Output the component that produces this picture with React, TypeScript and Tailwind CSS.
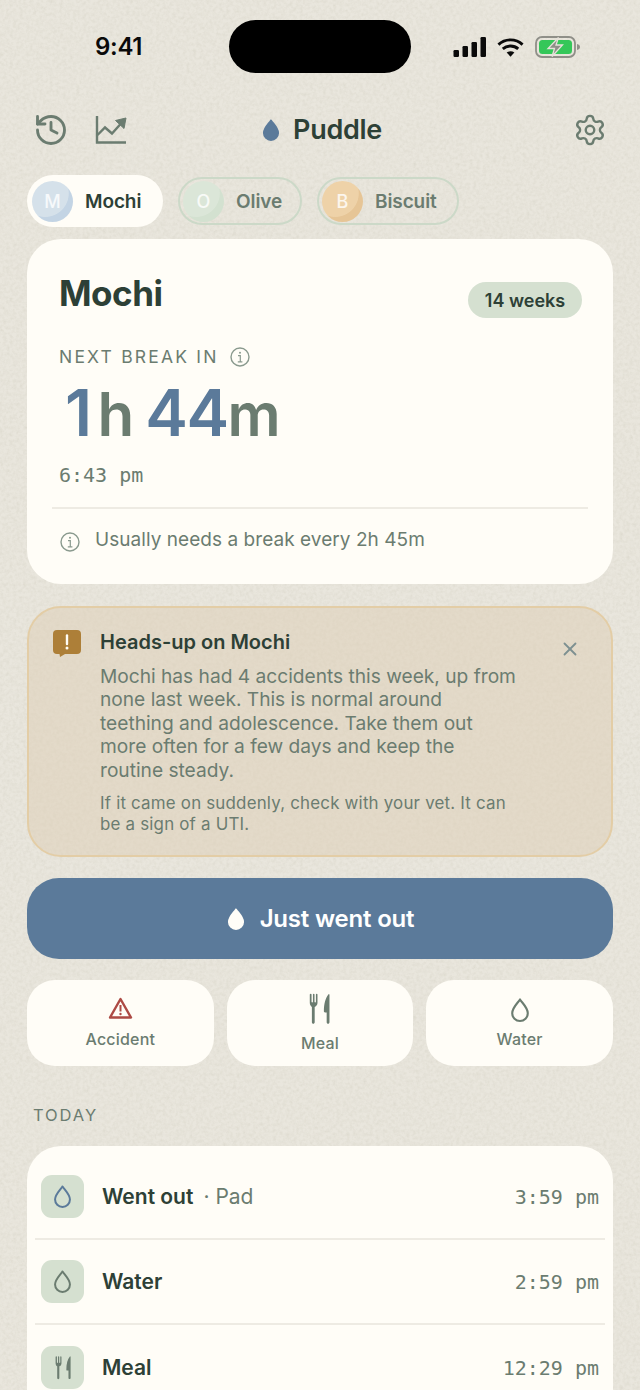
import React from 'react';
import { History, Settings, X } from 'lucide-react';

const Drop = ({ className, fill = 'none', stroke = 'currentColor', strokeWidth = 2.300 }: { className?: string; fill?: string; stroke?: string; strokeWidth?: number }) => (
  <svg viewBox="0 0 24 28" className={className} fill={fill} stroke={stroke} strokeWidth={strokeWidth}>
    <path d="M12 2.500C9.500 6.500 3.500 11.500 3.500 17.500a8.500 8.500 0 0 0 17 0C20.500 11.500 14.500 6.500 12 2.500Z" strokeLinejoin="round" />
  </svg>
);

const ForkKnife = ({ className }: { className?: string }) => (
  <svg viewBox="0 0 24 36" className={className} fill="currentColor">
    <path d="M2 1.200c.5 0 .9.4.9.9v8.200c0 .5.4.9.8.9s.8-.4.8-.9V2.100c0-.5.4-.9.9-.9s.9.4.9.9v8.200c0 .5.4.9.8.9s.8-.4.8-.9V2.100c0-.5.4-.9.9-.9s.9.4.9.9v9.400c0 2.400-1.200 4-3.200 4.700v17.600c0 1-.7 1.700-1.600 1.700s-1.600-.7-1.600-1.700V16.200C2.100 15.500.9 13.900.9 11.500V2.100c0-.5.5-.9 1.100-.9Z" />
    <path d="M22.600 1.300c.4 0 .8.4.8.9v31.500c0 1-.7 1.700-1.600 1.700s-1.600-.7-1.600-1.700V22.500h-1.900c-.8 0-1.300-.5-1.300-1.300 0-8.600 1.800-15.500 5.600-19.900Z" />
  </svg>
);

const Info = ({ className }: { className?: string }) => (
  <svg viewBox="0 0 20 20" className={className} fill="none" stroke="currentColor">
    <circle cx="10" cy="10" r="9" strokeWidth="1.400" />
    <circle cx="10" cy="5.800" r="1" fill="currentColor" stroke="none" />
    <path d="M8 8.700h2.300v6M7.800 14.800h4.600" strokeWidth="1.200" />
  </svg>
);

const TrendChart = ({ className }: { className?: string }) => (
  <svg viewBox="0 0 32 30" className={className} fill="none" stroke="currentColor" strokeWidth="2.400">
    <path d="M2 1v26.500h29" />
    <path d="M2.500 20l7.500-7.500 7 6 9-10" />
    <path d="M20.500 5.500L31 3l-2 10.500Z" fill="currentColor" strokeWidth="1" strokeLinejoin="round" />
  </svg>
);

const Warning = ({ className }: { className?: string }) => (
  <svg viewBox="0 0 24 22" className={className} fill="none" stroke="currentColor">
    <path d="M12 2L22.500 20.500H1.500Z" strokeWidth="2.400" strokeLinejoin="round" />
    <path d="M12 8v6.500" strokeWidth="2" />
    <circle cx="12" cy="17" r="1.200" fill="currentColor" stroke="none" />
  </svg>
);

const Bubble = ({ className }: { className?: string }) => (
  <svg viewBox="0 0 28 27" className={className}>
    <path d="M4 0h20a4 4 0 0 1 4 4v16a4 4 0 0 1-4 4H12l-5 3-.5-3H4a4 4 0 0 1-4-4V4a4 4 0 0 1 4-4Z" fill="#ad7f38" />
    <path d="M14 5.500v8.500" stroke="#fffdf7" strokeWidth="2.400" strokeLinecap="round" />
    <circle cx="14" cy="18" r="1.500" fill="#fffdf7" />
  </svg>
);

const StatusIcons = () => (
  <div className="flex items-center gap-[11px]">
    <svg viewBox="0 0 32 20" className="w-[33px] h-[20px]" fill="#0a0a0a">
      <rect x="0" y="13" width="5.500" height="7" rx="1.200" />
      <rect x="9" y="9" width="5.500" height="11" rx="1.200" />
      <rect x="18" y="5" width="5.500" height="15" rx="1.200" />
      <rect x="27" y="0" width="5.500" height="20" rx="1.200" />
    </svg>
    <svg viewBox="0 0 28 20" className="w-[27px] h-[20px]" fill="none" stroke="#0a0a0a" strokeWidth="3">
      <path d="M1.500 7.500c7-6.500 18-6.500 25 0" />
      <path d="M6 12c4.500-4 11.500-4 16 0" />
      <path d="M14 20l-4-4.200c2.300-1.800 5.700-1.800 8 0Z" fill="#0a0a0a" stroke="none" />
    </svg>
    <svg viewBox="0 0 46 22" className="w-[46px] h-[22px]">
      <rect x="1" y="1" width="39" height="20" rx="6" fill="none" stroke="#8f8f88" strokeWidth="1.800" />
      <rect x="4" y="4" width="33" height="14" rx="3.500" fill="#35c759" />
      <path d="M42 8v6c1.800-.4 3-1.500 3-3s-1.200-2.600-3-3Z" fill="#8f8f88" />
      <path d="M23.500 1.500L13 12.500h6.500l-2.500 8 10.500-11.500H21Z" fill="#8f8f88" stroke="#e6e2da" strokeWidth="1.300" />
    </svg>
  </div>
);

const pets = [
  { name: 'Mochi', letter: 'M', active: true, avatar: 'bg-[radial-gradient(circle_at_32%_30%,#d5e1ea_58%,#c3d4e4_60%)]', width: 'w-[136px]' },
  { name: 'Olive', letter: 'O', active: false, avatar: 'bg-[radial-gradient(circle_at_32%_30%,#dbe6d8_58%,#d3e1d0_60%)]', width: 'w-[124px]' },
  { name: 'Biscuit', letter: 'B', active: false, avatar: 'bg-[radial-gradient(circle_at_32%_30%,#eed2a8_58%,#e6c596_60%)]', width: 'w-[142px]' },
];

const logs = [
  { title: 'Went out', note: 'Pad', time: '3:59 pm', icon: <Drop className="w-[21px] h-[25px] text-[#5b7a9a]" /> },
  { title: 'Water', note: '', time: '2:59 pm', icon: <Drop className="w-[21px] h-[25px] text-[#6b7c70]" /> },
  { title: 'Meal', note: '', time: '12:29 pm', icon: <ForkKnife className="w-[16px] h-[25px] text-[#6b7c70]" /> },
];

export default function App() {
  return (
    <div className="relative w-[640px] h-[1390px] overflow-hidden bg-[#e9e6dd] font-['Inter',sans-serif] text-[#2d4036]">
      {/* paper texture */}
      <svg className="absolute inset-0 w-full h-full" aria-hidden="true">
        <filter id="paper">
          <feTurbulence type="fractalNoise" baseFrequency="0.3" numOctaves="3" seed="4" />
          <feColorMatrix values="0 0 0 0 0.48  0 0 0 0 0.46  0 0 0 0 0.36  0.5 0.5 0 0 -0.4" />
        </filter>
        <rect width="100%" height="100%" filter="url(#paper)" opacity="0.5" />
      </svg>

      <div className="relative flex flex-col">
        {/* status bar */}
        <div className="flex items-start h-[73px] pt-[20px]">
          <div className="w-[229px] pl-[95px] pt-[11px] text-[24px] leading-[32px] font-semibold text-[#0a0a0a] tracking-[-0.3px]">9:41</div>
          <div className="w-[182px] h-[53px] rounded-full bg-black" />
          <div className="pl-[42px] pt-[16px]"><StatusIcons /></div>
        </div>

        {/* header */}
        <div className="flex items-center justify-between h-[40px] mt-[37px] pl-[33px] pr-[33px]">
          <div className="flex items-center gap-[26px] w-[200px] text-[#6b7c70]">
            <History className="w-[36px] h-[36px]" strokeWidth={1.900} />
            <TrendChart className="w-[32px] h-[30px]" />
          </div>
          <div className="flex items-center gap-[12px] text-[27px] font-semibold tracking-[-0.3px] ml-[3px]">
            <Drop className="w-[20px] h-[24px]" fill="#5b7a9a" stroke="#5b7a9a" />
            Puddle
          </div>
          <div className="w-[200px] flex justify-end text-[#6b7c70]">
            <Settings className="w-[34px] h-[34px]" strokeWidth={1.700} />
          </div>
        </div>

        {/* pet pills */}
        <div className="flex items-center gap-[15px] mt-[25px] ml-[27px] h-[52px]">
          {pets.map((pet) => (
            <div
              key={pet.name}
              className={pet.active
                ? `flex items-center h-[52px] pl-[5px] rounded-full bg-[#fffdf7] ${pet.width}`
                : `flex items-center h-[48px] pl-[3px] rounded-full border-2 border-[#ccd9c8] ${pet.width}`}
            >
              <div className={`w-[41px] h-[41px] rounded-full flex items-center justify-center text-[18px] font-medium text-white/80 ${pet.avatar}`}>
                {pet.letter}
              </div>
              <span className={pet.active ? 'ml-[12px] pt-[2px] text-[19px] font-semibold tracking-[-0.1px]' : 'ml-[12px] pt-[2px] text-[19px] font-semibold tracking-[-0.1px] text-[#6b7c70]'}>
                {pet.name}
              </span>
            </div>
          ))}
        </div>

        {/* countdown card */}
        <div className="mx-[27px] mt-[12px] h-[345px] rounded-[34px] bg-[#fffdf7] px-[25px] flex flex-col">
          <div className="flex items-start justify-between pl-[7px] pr-[6px] pt-[32px]">
            <h1 className="text-[35px] leading-[44px] font-bold tracking-[-0.5px]">Mochi</h1>
            <div className="mt-[11px] h-[36px] w-[114px] pt-[1px] rounded-full bg-[#d5e0d0] flex items-center justify-center text-[18px] font-semibold">14 weeks</div>
          </div>
          <div className="flex items-center gap-[11px] pl-[7px] mt-[27px] text-[#6b7c70]">
            <span className="text-[17.500px] leading-[24px] tracking-[2.200px]">NEXT BREAK IN</span>
            <Info className="w-[20px] h-[20px] text-[#8a9a8e]" />
          </div>
          <div className="pl-[13px] mt-[8px] h-[72px] flex items-baseline leading-[72px] font-semibold text-[#6b7c70]">
            <span className="text-[64px] tracking-[-1.500px] text-[#5b7a9a]">1</span>
            <span className="ml-[7px] text-[60px]">h</span>
            <span className="ml-[11px] text-[64px] tracking-[-1.500px] text-[#5b7a9a]">44</span>
            <span className="text-[59px]">m</span>
          </div>
          <div className="pl-[7px] mt-[12px] font-['DejaVu_Sans_Mono',monospace] text-[20px] leading-[28px] text-[#6b7c70]">6:43 pm</div>
          <div className="mt-[18px] h-[2px] bg-[#eeebe3]" />
          <div className="flex items-center gap-[15px] pl-[8px] mt-[18px] text-[#6b7c70]">
            <Info className="w-[20px] h-[20px] text-[#8a9a8e] mt-[3px]" />
            <span className="text-[19px] leading-[26px] tracking-[0.050px]">Usually needs a break every 2h 45m</span>
          </div>
        </div>

        {/* alert */}
        <div className="mx-[27px] mt-[22px] h-[251px] rounded-[34px] border-2 border-[#e3cda6] bg-[#dfd0b8]/55 pl-[24px] pr-[30px] pt-[20px] flex items-start">
          <Bubble className="w-[28px] h-[27px] shrink-0 mt-[2px]" />
          <div className="ml-[19px] w-[418px]">
            <h2 className="text-[20px] leading-[28px] font-semibold">Heads-up on Mochi</h2>
            <p className="mt-[9px] text-[19.150px] leading-[23.400px] text-[#6b7c70]">
              Mochi has had 4 accidents this week, up from none last week. This is normal around teething and adolescence. Take them out more often for a few days and keep the routine steady.
            </p>
            <p className="mt-[11px] text-[16.900px] leading-[21px] tracking-[0.200px] text-[#6b7c70]">
              If it came on suddenly, check with your vet. It can be a sign of a UTI.
            </p>
          </div>
          <X className="ml-auto mt-[10px] w-[22px] h-[22px] text-[#7d9091]" strokeWidth={2} />
        </div>

        {/* primary action */}
        <div className="mx-[27px] mt-[21px] h-[81px] rounded-[32px] bg-[#5b7a9a] flex items-center justify-center gap-[14px] text-white text-[24px] font-semibold tracking-[-0.2px]">
          <Drop className="w-[20px] h-[24px]" fill="#fffdf7" stroke="#fffdf7" />
          Just went out
        </div>

        {/* quick actions */}
        <div className="mx-[27px] mt-[21px] grid grid-cols-3 gap-[13px]">
          <div className="h-[86px] rounded-[28px] bg-[#fffdf7] flex flex-col items-center pt-[17px]">
            <Warning className="w-[25px] h-[22px] text-[#ad4a44]" />
            <span className="mt-[9px] text-[16px] leading-[22px] font-medium tracking-[0.200px] text-[#6b7c70]">Accident</span>
          </div>
          <div className="h-[86px] rounded-[28px] bg-[#fffdf7] flex flex-col items-center pt-[12px]">
            <ForkKnife className="w-[21px] h-[33px] text-[#6b7c70]" />
            <span className="mt-[7px] text-[16px] leading-[22px] font-medium tracking-[0.200px] text-[#6b7c70]">Meal</span>
          </div>
          <div className="h-[86px] rounded-[28px] bg-[#fffdf7] flex flex-col items-center pt-[17px]">
            <Drop className="w-[22px] h-[26px] text-[#6b7c70]" />
            <span className="mt-[5px] text-[16px] leading-[22px] font-medium tracking-[0.200px] text-[#6b7c70]">Water</span>
          </div>
        </div>

        <div className="ml-[33px] mt-[37px] text-[16.500px] leading-[24px] tracking-[1.900px] text-[#6b7c70]">TODAY</div>

        {/* log list */}
        <div className="mx-[27px] mt-[19px] rounded-[34px] bg-[#fffdf7] px-[8px] pt-[9px] h-[300px]">
          {logs.map((log, i) => (
            <div key={log.title} className={i < 2 ? 'flex items-center h-[85px] border-b-2 border-[#eeebe3]' : 'flex items-center h-[85px]'}>
              <div className="ml-[6px] w-[43px] h-[43px] rounded-[11px] bg-[#d5e0d0] flex items-center justify-center">{log.icon}</div>
              <span className="ml-[18px] pt-[1px] text-[21px] font-semibold">{log.title}</span>
              {log.note && <span className="ml-[10px] text-[21px] text-[#6b7c70]">· {log.note}</span>}
              <span className="ml-auto mr-[6px] font-['DejaVu_Sans_Mono',monospace] text-[20px] text-[#6b7c70]">{log.time}</span>
            </div>
          ))}
        </div>
      </div>
    </div>
  );
}
